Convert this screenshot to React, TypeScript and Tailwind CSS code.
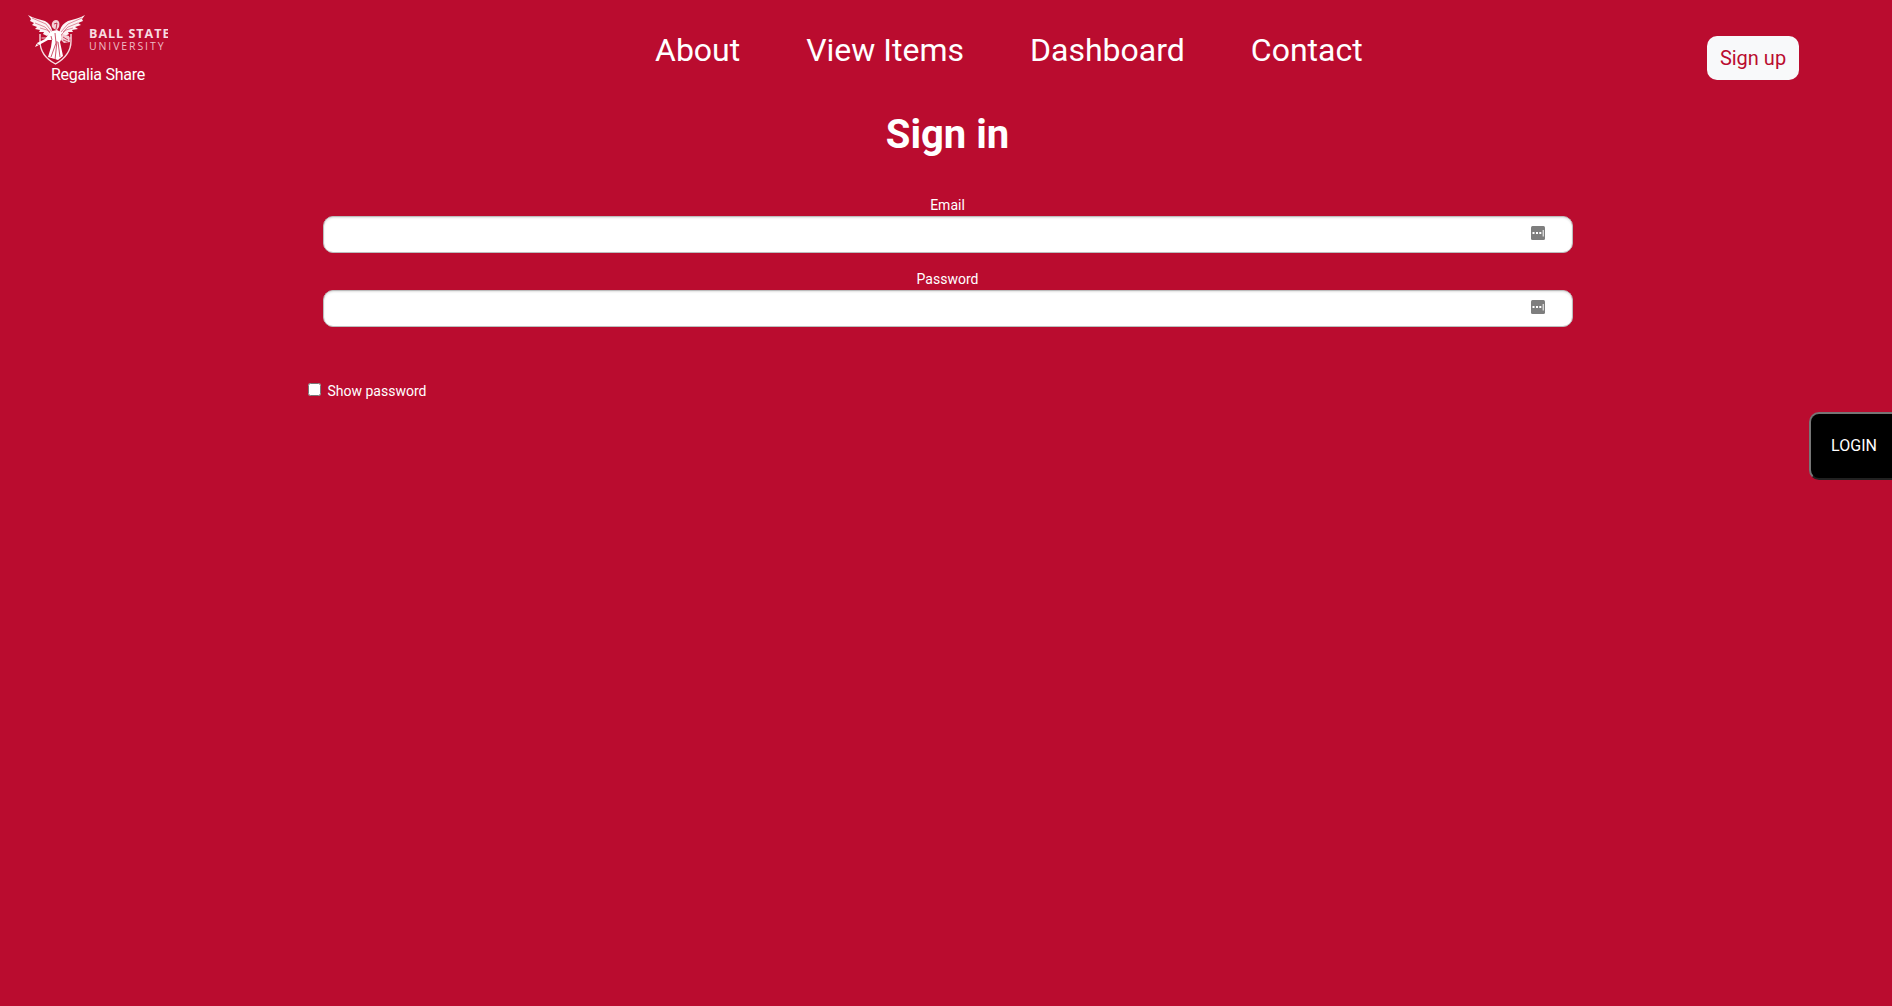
import { useState } from "react";

function Logo() {
  return (
    <svg className="block h-[52px] w-[140px]" viewBox="0 0 140 52" fill="none">
      <path d="M12 20V27C12 37 18 45 27.500 50C38 44 43 37 43 27V20" stroke="#f8dce1" strokeWidth="1.4" />
      <path d="M13.500 24H21M34 24H43" stroke="#f4ced5" strokeWidth="1" />
      <path d="M0 1C5 4 11 5 17 7C21 9 23 12 24 16L26 21L22 20L19 22L15 20L16 18L11 18L12 16L7 15L9 13L4 11L6 9L2 7L3 5Z" fill="#fff" fillOpacity=".95" />
      <path d="M57 1C52 4 46 5 40 7C36 9 33 12 32 16L30 21L34 20L37 22L41 20L40 18L45 18L44 16L50 15L47 13L53 11L50 9L55 7L54 5Z" fill="#fff" fillOpacity=".95" />
      <path d="M4 4L18 10L24 18M7 9L17 13L22 18M12 14L19 16L23 20M54 4L40 10L33 18M50 9L40 13L35 18M45 14L38 16L34 20" stroke="#ba0c2f" strokeWidth=".45" />
      <path d="M24 13C23 9 25 6 28 6C31 6 32 9 31 13L29 16L26 15Z" fill="#f4ced5" />
      <path d="M26 10L29 9L28 15" stroke="#ba0c2f" strokeWidth=".8" />
      <path d="M24 17L29 16L33 18L34 24L32 28L35 42L30 46L20 43L23 33L24 26L20 26L11 31L7 33L9 29L17 25L21 20Z" fill="white" />
      <path d="M27 19L28 29L23 43M29 27L27 46M30 28L32 43M23 22L24 26" stroke="#ba0c2f" strokeWidth=".7" />
      <path d="M34 20L41 22L42 28L36 29L33 26Z" fill="#f4ced5" />
      <path d="M35 23L40 26M35 26L40 28M8 29L12 32" stroke="#ba0c2f" strokeWidth=".7" />
      <text x="61" y="24.400" textLength="80.500" lengthAdjust="spacing" fill="#f8dce1" fontFamily="Open Sans, sans-serif" fontSize="12.500" fontWeight="700">BALL STATE</text>
      <text x="61" y="36.200" textLength="74.500" lengthAdjust="spacing" fill="#f0bcc6" fontFamily="Open Sans, sans-serif" fontSize="10.500" fontWeight="500">UNIVERSITY</text>
    </svg>
  );
}

function FieldIcon() {
  return (
    <svg className="h-[14px] w-[14px]" viewBox="0 0 14 14">
      <rect width="14" height="14" rx="1.500" fill="#7e7e7e" />
      <path d="M1.500 6h2v2h-2zM5 6h2v2h-2zM8.300 6h2v2h-2zM11.700 4h1v6.500h-1z" fill="white" />
    </svg>
  );
}

function Field({ label, type }: { label: string; type: string }) {
  return (
    <label className="flex h-[74px] flex-col items-center text-sm leading-5">
      <span className="h-[21px] pr-px">{label}</span>
      <span className="flex h-[37px] w-full items-start rounded-[10px] border border-[#bdbdbd] bg-white pr-[27px] shadow-[inset_0_1px_2px_rgba(0,0,0,0.12)]">
        <input aria-label={label} type={type} className="h-full flex-1 bg-transparent px-3 text-black outline-none" />
        <span className="mt-[9px]"><FieldIcon /></span>
      </span>
    </label>
  );
}

export default function App() {
  const [shown, setShown] = useState(false);
  return (
    <div className="h-screen overflow-hidden bg-[#ba0c2f] font-[Roboto,sans-serif] text-white">
      <header className="flex h-[111px] items-start">
        <div className="ml-7 mt-[14px] w-[140px] text-center text-base leading-5">
          <Logo />
          <div className="-mt-px tracking-[-0.25px]">Regalia Share</div>
        </div>
        <nav className="ml-[487px] mt-[30px] flex gap-[66px] whitespace-nowrap text-[32px] leading-10">
          <a>About</a>
          <a>View Items</a>
          <a>Dashboard</a>
          <a>Contact</a>
        </nav>
        <button className="ml-auto mr-[93px] mt-9 h-11 w-[92px] rounded-[10px] bg-[#f8f9fa] text-xl leading-7 text-[#ba0c2f]">Sign up</button>
      </header>
      <main>
        <h1 className="pl-[3px] text-center text-[40px] font-bold leading-[48px]">Sign in</h1>
        <form className="ml-[323px] mt-9 w-[1250px]">
          <Field label="Email" type="email" />
          <Field label="Password" type={shown ? "text" : "password"} />
        </form>
        <label className="ml-[308px] mt-[38px] flex h-5 w-fit text-sm leading-5">
          <input type="checkbox" checked={shown} onChange={() => setShown(!shown)} className="mr-[6.5px] mt-[2px] h-[13px] w-[13px]" />
          Show password
        </label>
        <div className="mt-[11px] flex justify-end">
          <button className="-mr-[9px] h-[68px] w-[92px] rounded-[10px] border-2 border-t-[#767676] border-l-[#767676] border-r-[#212121] border-b-[#212121] bg-black pr-[2px] text-base">LOGIN</button>
        </div>
      </main>
    </div>
  );
}
